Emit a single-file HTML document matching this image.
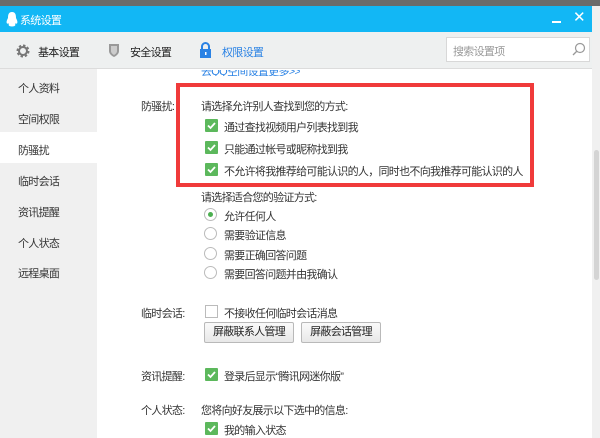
<!DOCTYPE html>
<html><head><meta charset="utf-8"><style>
*{margin:0;padding:0;box-sizing:border-box}
body{width:600px;height:438px;overflow:hidden;position:relative;background:#fff;font-family:"Liberation Sans","Noto Sans CJK SC",sans-serif;font-size:11px;letter-spacing:-0.7px;color:#333}
.a{position:absolute;white-space:nowrap}
.cb{position:absolute;width:13px;height:13px;background:#5cb85c;border-radius:1px}
.cb svg{position:absolute;left:1px;top:1px}
.ub{position:absolute;width:13px;height:13px;border:1px solid #bbb;background:#fff}
.rd{position:absolute;width:13px;height:13px;border:1px solid #bbb;border-radius:50%;background:#fff}
.btn{position:absolute;height:21px;border:1px solid #b9b9b9;border-radius:2px;background:linear-gradient(#fafafa,#e8e8e8);color:#222;text-align:center;line-height:19px}
.side{position:absolute;left:0;top:69px;width:97px;height:369px;background:#f0f0f0}
.si{position:absolute;left:18px;color:#333}
</style></head><body>
<div class="a" style="left:0;top:0;width:600px;height:6px;background:#6b6b6b"></div>
<div class="a" style="left:0;top:6px;width:592px;height:26px;background:#12b7f5"></div>
<div class="a" style="left:592px;top:6px;width:8px;height:432px;background:#f0f0f0"></div>
<svg class="a" style="left:6px;top:12px" width="12" height="15" viewBox="0 0 12 15"><path d="M6 0C2.5 0 2 3 2 6 1 8 0 10 1 11.5 2 12 2.5 11 3 12 2 13 3 14.5 6 14.5 9 14.5 10 13 9 12 9.5 11 10 12 11 11.5 12 10 11 8 10 6 10 3 9.5 0 6 0Z" fill="#fff"/></svg>
<div class="a" style="left:20px;top:12px;color:#fff">系统设置</div>
<div class="a" style="left:552px;top:21px;width:9px;height:2px;background:#fff"></div>
<div class="a" style="left:573px;top:8px;color:#fff;font-size:15px">✕</div>
<div class="a" style="left:0;top:32px;width:592px;height:37px;background:#eef0f0;border-bottom:1px solid #dcdcdc"></div>
<svg class="a" style="left:16px;top:44px" width="14" height="14" viewBox="0 0 14 14"><circle cx="7" cy="7" r="5" fill="none" stroke="#777" stroke-width="3" stroke-dasharray="2.2 1.7"/><circle cx="7" cy="7" r="4" fill="none" stroke="#777" stroke-width="2"/></svg>
<div class="a" style="left:38px;top:44px;color:#222">基本设置</div>
<svg class="a" style="left:108px;top:43px" width="12" height="15" viewBox="0 0 12 15"><path d="M1 1H11V8C11 11 8 13 6 14 4 13 1 11 1 8Z" fill="#999"/><path d="M3 3H9V8C9 10 7.5 11 6 12 4.5 11 3 10 3 8Z" fill="#ccc"/></svg>
<div class="a" style="left:130px;top:44px;color:#222">安全设置</div>
<svg class="a" style="left:199px;top:42px" width="13" height="16" viewBox="0 0 13 16"><path d="M3 7V4.5A3.5 3.5 0 0 1 10 4.5V7" fill="none" stroke="#2a82e4" stroke-width="2"/><rect x="1" y="7" width="11" height="9" fill="#2a82e4"/><rect x="6" y="10" width="1.5" height="3" fill="#fff"/></svg>
<div class="a" style="left:222px;top:44px;color:#2a82e4">权限设置</div>
<div class="a" style="left:446px;top:37px;width:144px;height:25px;background:#fff;border:1px solid #d8d8d8"></div>
<div class="a" style="left:453px;top:43px;color:#999">搜索设置项</div>
<svg class="a" style="left:572px;top:42px" width="14" height="14" viewBox="0 0 14 14"><circle cx="8" cy="6" r="4.5" fill="none" stroke="#999" stroke-width="1.2"/><path d="M5 9L1 13" stroke="#999" stroke-width="1.3"/></svg>
<div class="side"></div>
<div class="a" style="left:0;top:132px;width:97px;height:31px;background:#fff"></div>
<div class="si" style="top:80px">个人资料</div>
<div class="si" style="top:111px">空间权限</div>
<div class="si" style="top:142px">防骚扰</div>
<div class="si" style="top:173px">临时会话</div>
<div class="si" style="top:204px">资讯提醒</div>
<div class="si" style="top:235px">个人状态</div>
<div class="si" style="top:265px">远程桌面</div>
<div class="a" style="left:594px;top:150px;width:5px;height:130px;background:#d4d4d4;border-radius:3px"></div>
<div class="a" style="left:201px;top:70px;color:#2a82e4;height:6px;overflow:hidden;line-height:4px">去QQ空间设置更多&gt;&gt;</div>
<div class="a" style="left:176px;top:83px;width:358px;height:104px;border:4px solid #f03a3a"></div>
<div class="a" style="left:141px;top:98px">防骚扰:</div>
<div class="a" style="left:201px;top:98px">请选择允许别人查找到您的方式:</div>
<div class="cb" style="left:205px;top:119px"><svg width="11" height="11"><path d="M2 5.5L4.5 8 9 3" stroke="#fff" stroke-width="1.8" fill="none"/></svg></div>
<div class="a" style="left:224px;top:119px">通过查找视频用户列表找到我</div>
<div class="cb" style="left:205px;top:141px"><svg width="11" height="11"><path d="M2 5.5L4.5 8 9 3" stroke="#fff" stroke-width="1.8" fill="none"/></svg></div>
<div class="a" style="left:224px;top:141px">只能通过帐号或昵称找到我</div>
<div class="cb" style="left:205px;top:163px"><svg width="11" height="11"><path d="M2 5.5L4.5 8 9 3" stroke="#fff" stroke-width="1.8" fill="none"/></svg></div>
<div class="a" style="left:224px;top:163px">不允许将我推荐给可能认识的人，同时也不向我推荐可能认识的人</div>
<div class="a" style="left:201px;top:189px">请选择适合您的验证方式:</div>
<div class="rd" style="left:204px;top:208px"><div style="position:absolute;left:3px;top:3px;width:5px;height:5px;border-radius:50%;background:#4caf50"></div></div>
<div class="a" style="left:224px;top:208px">允许任何人</div>
<div class="rd" style="left:204px;top:227px"></div>
<div class="a" style="left:224px;top:227px">需要验证信息</div>
<div class="rd" style="left:204px;top:247px"></div>
<div class="a" style="left:224px;top:247px">需要正确回答问题</div>
<div class="rd" style="left:204px;top:266px"></div>
<div class="a" style="left:224px;top:266px">需要回答问题并由我确认</div>
<div class="a" style="left:141px;top:305px">临时会话:</div>
<div class="ub" style="left:205px;top:305px"></div>
<div class="a" style="left:224px;top:305px">不接收任何临时会话消息</div>
<div class="btn" style="left:204px;top:322px;width:90px">屏蔽联系人管理</div>
<div class="btn" style="left:301px;top:322px;width:80px">屏蔽会话管理</div>
<div class="a" style="left:141px;top:368px">资讯提醒:</div>
<div class="cb" style="left:205px;top:368px"><svg width="11" height="11"><path d="M2 5.5L4.5 8 9 3" stroke="#fff" stroke-width="1.8" fill="none"/></svg></div>
<div class="a" style="left:224px;top:368px">登录后显示“腾讯网迷你版”</div>
<div class="a" style="left:141px;top:402px">个人状态:</div>
<div class="a" style="left:201px;top:402px">您将向好友展示以下选中的信息:</div>
<div class="cb" style="left:205px;top:422px"><svg width="11" height="11"><path d="M2 5.5L4.5 8 9 3" stroke="#fff" stroke-width="1.8" fill="none"/></svg></div>
<div class="a" style="left:224px;top:422px">我的输入状态</div>
</body></html>
